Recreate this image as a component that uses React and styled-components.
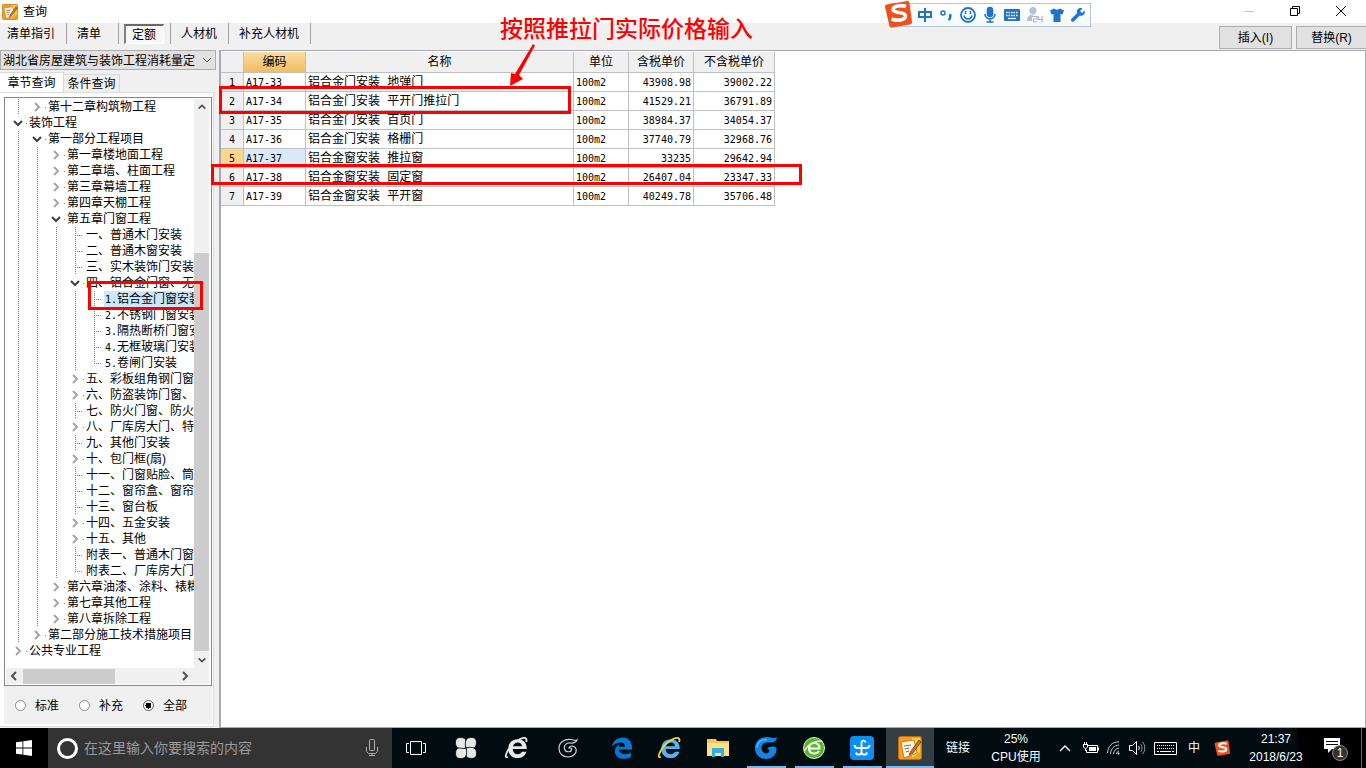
import React from "react";
import styled, { createGlobalStyle, css } from "styled-components";

const cjk = `"Liberation Sans", "Noto Sans CJK SC", sans-serif`;
const mono = `"Liberation Mono", "Noto Sans CJK SC", monospace`;
const digits = `"DejaVu Sans Mono", monospace`;

const Global = createGlobalStyle`
  *, *::before, *::after { box-sizing: border-box; }
  body { margin: 0; background: #f0f0f0; color: #000; font: 12px/16px ${cjk}; }
  button, input, select { font: inherit; color: inherit; margin: 0; padding: 0; border: 0; background: none; }
  svg { display: block; flex: none; }
`;

/* ---------- window frame ---------- */
const Page = styled.div`
  position: relative;
  display: flex;
  flex-direction: column;
  min-height: 100vh;
  overflow: hidden;
`;
const TitleBar = styled.header`
  display: flex;
  align-items: center;
  gap: 5px;
  height: 23px;
  padding-left: 2px;
  background: #fff;
`;
const Title = styled.h1`
  flex: 1;
  margin: 0;
  font-size: 12px;
  font-weight: 400;
`;
const WindowButton = styled.button`
  display: flex;
  align-items: center;
  justify-content: center;
  width: 46px;
  height: 22px;
  padding-bottom: 2px;
`;
const WindowButtons = styled.div`
  display: flex;
  margin-right: 2px;
`;
const Toolbar = styled.nav`
  display: flex;
  justify-content: space-between;
  height: 27px;
`;
const Modes = styled.div`
  display: flex;
  height: 21px;
`;
const Mode = styled.button`
  padding: 0 11px 0 10px;
  border-right: 1px solid #a0a0a0;
  white-space: nowrap;
  &:first-child { padding-left: 7px; }
  ${(p) => p.$wide && css`padding-right: 17px;`}
`;
const Pressed = styled.span`
  display: block;
  margin: 0 -5px;
  padding: 1px 7px 0 6px;
  border: 1px solid #fff;
  border-top: 2px solid #696969;
  border-left: 2px solid #808080;
  background: #f8f8f8;
`;
const Actions = styled.div`
  display: flex;
  gap: 4px;
  padding: 3px 0 1px;
`;
const Action = styled.button`
  width: 73px;
  border: 1px solid #adadad;
  background: #e1e1e1;
  &:last-child { width: 70px; border-right: 0; }
`;

/* ---------- left column ---------- */
const Body = styled.main`
  display: flex;
  flex: 1;
`;
const Side = styled.aside`
  display: flex;
  flex: none;
  flex-direction: column;
  width: 219px;
  padding-bottom: 1px;
`;
const Combo = styled.div`
  position: relative;
  width: 216px;
  height: 20px;
  svg { position: absolute; right: 4px; top: 7px; pointer-events: none; }
`;
const ComboSelect = styled.select`
  appearance: none;
  width: 100%;
  height: 20px;
  padding: 1px 18px 0 2px;
  border: 1px solid #adadad;
  background: #e1e1e1;
  overflow: hidden;
`;
const Tabs = styled.div`
  display: flex;
  align-items: flex-end;
  height: 22px;
  padding-top: 2px;
`;
const Tab = styled.button`
  width: 56px;
  height: 18px;
  padding-top: 1px;
  border: 1px solid #d9d9d9;
  border-width: 1px 1px 0 0;
  ${(p) => p.$active && css`
    width: 64px;
    height: 20px;
    padding-bottom: 1px;
    background: #fff;
  `}
`;
const TabPane = styled.section`
  display: flex;
  flex: 1;
  flex-direction: column;
  width: 214px;
  padding: 4px 1px 2px 4px;
  border: 1px solid #dcdcdc;
  border-left: 0;
  background: #fff;
`;
const TreeBox = styled.div`
  display: grid;
  flex: 1;
  grid-template: 1fr 16px / 188px 15px;
  width: 208px;
  padding: 1px;
  border: 1px solid #828790;
`;
const TreeList = styled.ul`
  margin: 0;
  padding: 0 0 0 3px;
  overflow: hidden;
  list-style: none;
`;
const TreeRow = styled.li`
  display: flex;
  height: 16px;
  white-space: nowrap;
`;
const dotsDown = "repeating-linear-gradient(to bottom, #808080 0 1px, transparent 1px 2px)";
const dotsAcross = "repeating-linear-gradient(to right, #808080 0 1px, transparent 1px 2px)";
const Guide = styled.span`
  flex: none;
  width: 19px;
  background: ${dotsDown} 9px 0 / 1px 16px no-repeat;
`;
const Leaf = styled.span`
  flex: none;
  width: 19px;
  background:
    ${dotsDown} 9px 0 / 1px ${(p) => (p.$last ? 8 : 16)}px no-repeat,
    ${dotsAcross} 9px 8px / 8px 1px no-repeat;
`;
const Toggle = styled.button`
  display: flex;
  flex: none;
  align-items: center;
  width: 19px;
  padding-left: 3px;
  background: ${dotsAcross} 17px 8px / 1px 1px no-repeat;
`;
const Label = styled.span`
  padding: 0 1px;
  background: ${(p) => (p.$selected ? "#cce8ff" : "none")};
`;
const Num = styled.span`
  font-family: ${digits};
  font-size: 10px;
`;
const ScrollY = styled.div`
  display: flex;
  flex-direction: column;
  align-items: center;
  justify-content: space-between;
  padding: 3px 0;
  background: #f0f0f0;
`;
const ThumbY = styled.div`
  width: 15px;
  flex: 1;
  margin: 141px 0 4px;
  background: #cdcdcd;
`;
const ScrollX = styled.div`
  display: flex;
  grid-column: 1 / 3;
  align-items: center;
  padding: 0 18px 0 2px;
  background: #f0f0f0;
`;
const ThumbX = styled.div`
  width: 92px;
  height: 15px;
  margin: 0 auto 0 3px;
  background: #cdcdcd;
`;
const Filters = styled.div`
  display: flex;
  gap: 20px;
  align-items: center;
  height: 38px;
  padding: 1px 0 0 11px;
  background: #f0f0f0;
`;
const Filter = styled.label`
  display: flex;
  align-items: center;
  gap: 9px;
`;
const Radio = styled.input`
  appearance: none;
  width: 11px;
  height: 11px;
  border: 1px solid #8a8a8a;
  border-radius: 50%;
  background: #fff;
  &:checked { background: radial-gradient(circle, #000 0 3px, #fff 3px); border-color: #555; }
`;

/* ---------- price table ---------- */
const Sheet = styled.section`
  flex: 1;
  border: 1px solid #a8a8b0;
  border-left-width: 2px;
  background: #fff;
  padding-top: 1px;
`;
const Table = styled.table`
  width: 554px;
  border-collapse: separate;
  border-spacing: 0;
  table-layout: fixed;
`;
const Th = styled.th`
  width: ${(p) => p.$w}px;
  height: 21px;
  padding: 0;
  border: solid #c0c0c0;
  border-width: 0 1px 1px 0;
  background: ${(p) => (p.$hot ? "linear-gradient(#fbdca4, #f3bd5e)" : "#f0f0f0")};
  font-weight: 400;
`;
const Td = styled.td`
  height: 19px;
  padding: 2px 2px 0;
  border: solid #c0c0c0;
  border-width: 0 1px 1px 0;
  background: ${(p) => (p.$hot ? "#d9eafa" : "#fff")};
  font: 12px/16px ${mono};
  text-align: ${(p) => p.$align || "left"};
  white-space: nowrap;
  ${(p) => p.$small && css`
    font-family: ${digits};
    font-size: 10px;
  `}
`;
const RowHead = styled(Td).attrs({ as: "th", scope: "row" })`
  background: ${(p) => (p.$hot ? "#ffd58a" : "#f0f0f0")};
  font-weight: 400;
  text-align: center;
`;

/* ---------- red markup laid over the window ---------- */
const MarkBox = styled.div`
  position: absolute;
  left: ${(p) => p.$x}px;
  top: ${(p) => p.$y}px;
  width: ${(p) => p.$w}px;
  height: ${(p) => p.$h}px;
  border: 3px solid #f00;
  pointer-events: none;
`;
const MarkNote = styled.p`
  position: absolute;
  left: 500px;
  top: 14px;
  margin: 0;
  color: #f00;
  font-size: 23px;
  font-weight: 500;
  line-height: 30px;
  white-space: nowrap;
`;
const MarkArrow = styled.svg`
  position: absolute;
  left: 506px;
  top: 42px;
`;

/* ---------- input method bar ---------- */
const ImeBar = styled.div`
  position: absolute;
  top: 3px;
  right: 275px;
  display: flex;
  align-items: center;
  gap: 5px;
  width: 201px;
  height: 24px;
  padding-left: 26px;
  border: 1px solid #b4c6da;
  background: linear-gradient(#fff, #f4f9fd);
`;
const ImeLogo = styled.span`
  position: absolute;
  left: -7px;
  top: -4px;
`;

/* ---------- taskbar ---------- */
const Taskbar = styled.footer`
  display: flex;
  height: 40px;
  background: #000c10;
  color: #fff;
`;
const Start = styled.button`
  display: flex;
  flex: none;
  align-items: center;
  justify-content: center;
  width: 48px;
  background: #000;
`;
const Search = styled.label`
  display: flex;
  flex: none;
  align-items: center;
  gap: 5px;
  width: 344px;
  padding: 0 14px 0 8px;
  background: #333;
`;
const SearchInput = styled.input`
  flex: 1;
  min-width: 0;
  font-size: 14px;
  &::placeholder { color: #9a9a9a; opacity: 1; }
`;
const Apps = styled.div`
  display: flex;
  flex: 1;
`;
const AppButton = styled.button`
  display: flex;
  flex: none;
  align-items: center;
  justify-content: center;
  width: ${(p) => p.$w || 48}px;
  background: ${(p) => (p.$active ? "#343e42" : "none")};
  ${(p) => p.$running && css`
    background-image: linear-gradient(#76b9ed, #76b9ed);
    background-size: ${p.$active ? "48px" : "39px"} 2px;
    background-position: center bottom;
    background-repeat: no-repeat;
  `}
`;
const PinGroup = styled.div`
  display: flex;
  margin-right: 5px;
`;
const Tray = styled.div`
  display: flex;
  flex: none;
  align-items: center;
  background: linear-gradient(#000, #000) right / 69px 40px no-repeat;
`;
const TrayItem = styled.button`
  display: flex;
  flex: none;
  align-items: center;
  justify-content: center;
  width: ${(p) => p.$w}px;
  height: 40px;
  font-size: 12px;
  line-height: 18px;
  white-space: nowrap;
`;
const Peek = styled.span`
  width: 5px;
  height: 40px;
  margin-left: 3px;
  border-left: 1px solid #666;
`;

/* ---------- drawings ---------- */
const Chevron = ({ dir, color = "#505050", size = 12, w = 2 }) => {
  const d = {
    down: "M2 4l4 4 4-4",
    up: "M2 8l4-4 4 4",
    right: "M4 2l4 4-4 4",
    left: "M8 2L4 6l4 4",
  }[dir];
  return (
    <svg width={size} height={size} viewBox="0 0 12 12" fill="none" stroke={color} strokeWidth={w}>
      <path d={d} />
    </svg>
  );
};
const BookIcon = ({ size }) => (
  <svg width={size} height={size} viewBox="0 0 24 24">
    <rect x=".5" y=".5" width="23" height="23" rx="2" fill="#f5a01a" stroke="#c66a08" />
    <path d="M14 2h8v14l-8 6z" fill="#ffd042" />
    <path d="M3 6l13-2 3 13-13 5z" fill="#fff8e4" stroke="#b56a1a" strokeWidth=".8" />
    <path d="M6 10l7-1M6.500 13l5-1M8 16l3-1" stroke="#8b6a48" strokeWidth="1.200" />
    <path d="M21 4l-8 11-2 4 4-2 8-11z" fill="#c9781a" stroke="#6b3c08" strokeWidth=".8" />
  </svg>
);
const SogouIcon = ({ size }) => (
  <svg width={size} height={size} viewBox="0 0 28 28">
    <path d="M3 4.500L23 1c1.500-.2 2.300.4 2.500 1.700L28 22c.2 1.400-.5 2.200-1.800 2.400L8 27.500c-1.400.2-2.300-.4-2.600-1.700L1 7c-.3-1.400.5-2.200 2-2.500z" fill="#f0501e" />
    <path d="M22 6.500c-5-1.800-13-.8-13 3 0 4.500 12.500 1.500 12.500 6.500 0 4.500-9 5-14 3" fill="none" stroke="#fff" strokeWidth="3.600" />
  </svg>
);
const blue = "#1f74c9";
const ImeIcons = () => (
  <>
    <svg width="16" height="16" viewBox="0 0 16 16" fill="none" stroke={blue} strokeWidth="2">
      <path d="M2 5h12v5H2zM8 1v14" />
    </svg>
    <svg width="16" height="16" viewBox="0 0 16 16" fill="none" stroke={blue} strokeWidth="1.500">
      <circle cx="5" cy="6" r="2" />
      <path d="M11 8.500h1.500c0 2 0 3-2 4.500" strokeWidth="2.400" />
    </svg>
    <svg width="18" height="18" viewBox="0 0 18 18" fill="none" stroke={blue} strokeWidth="1.800">
      <circle cx="9" cy="9" r="7" />
      <path d="M5 9.500c1 4.500 7 4.500 8 0M6.500 5v3M11.500 5v3" strokeWidth="1.500" />
    </svg>
    <svg width="16" height="18" viewBox="0 0 16 18" fill="none" stroke={blue} strokeWidth="1.600">
      <rect x="5.500" y="1.500" width="5" height="9" rx="2.500" fill={blue} />
      <path d="M3 8c0 6.500 10 6.500 10 0M8 13v3M4.500 16h7" />
    </svg>
    <svg width="18" height="16" viewBox="0 0 18 16">
      <rect x="1" y="2" width="16" height="12" rx="1" fill={blue} />
      <path d="M3 5.500h12M3 8.500h12" stroke="#fff" strokeWidth="1.500" strokeDasharray="1.500 1" />
      <path d="M5 11.500h8" stroke="#fff" strokeWidth="1.300" />
    </svg>
    <svg width="18" height="18" viewBox="0 0 18 18">
      <circle cx="7" cy="4.500" r="3.500" fill="#b4c0d4" />
      <path d="M1 15c0-4 2-6.500 6-6.500s5 1 6 3.500v3z" fill="#b4c0d4" />
      <path d="M7 10.500h4v2.500H7.500V16H11M12.500 10v3.500H17M16 10v6.500" fill="none" stroke="#fff" strokeWidth="3" />
      <path d="M7 10.500h4v2.500H7.500V16H11M12.500 10v3.500H17M16 10v6.500" fill="none" stroke="#aab6cc" strokeWidth="1.200" />
    </svg>
    <svg width="16" height="16" viewBox="0 0 16 16">
      <path d="M5 1.500c1.500 1.500 4.500 1.500 6 0l4 2-1.500 4-2-.5v8h-7V7l-2 .5L1 3.500z" fill={blue} />
    </svg>
    <svg width="16" height="16" viewBox="0 0 16 16">
      <path d="M14.500 3.500L12 6 10 4l2.500-2.500C9 0 6 3 7.300 6L1.500 11.800c-1.500 1.500.8 4 2.500 2.500L9.800 8.500c3.200 1.200 6-1.800 4.700-5z" fill={blue} />
    </svg>
  </>
);
const eRing = "M21 13H8c.3 3.300 2 4.800 4.700 4.800 1.900 0 3.100-.8 3.800-2.300h4.200c-1.200 3.900-4 5.800-8.100 5.800C7.400 21.300 4 18 4 12.700 4 7.500 7.600 4 12.600 4 18 4 21.200 7.600 21 13zM8.200 10.400h8.500c-.2-2.200-1.700-3.500-4.100-3.500-2.300 0-3.900 1.300-4.400 3.500z";
const Browser = ({ fill, ring }) => (
  <svg width="26" height="26" viewBox="0 0 24 24">
    <path d={eRing} fill={fill} />
    <path d="M3.500 20C-1.500 23 4 10 12 5.500c5-3.500 10-4.500 8.500 1" fill="none" stroke={ring} strokeWidth="1.700" />
  </svg>
);

/* ---------- data ---------- */
// [depth, kind, text]; kind: open, closed, leaf, last
const tree = [
  [1, "closed", "第十二章构筑物工程"],
  [0, "open", "装饰工程"],
  [1, "open", "第一部分工程项目"],
  [2, "closed", "第一章楼地面工程"],
  [2, "closed", "第二章墙、柱面工程"],
  [2, "closed", "第三章幕墙工程"],
  [2, "closed", "第四章天棚工程"],
  [2, "open", "第五章门窗工程"],
  [3, "leaf", "一、普通木门安装"],
  [3, "leaf", "二、普通木窗安装"],
  [3, "leaf", "三、实木装饰门安装"],
  [3, "open", "四、铝合金门窗、无"],
  [4, "leaf", "铝合金门窗安装", "1."],
  [4, "leaf", "不锈钢门窗安装", "2."],
  [4, "leaf", "隔热断桥门窗安装", "3."],
  [4, "leaf", "无框玻璃门安装", "4."],
  [4, "last", "卷闸门安装", "5."],
  [3, "closed", "五、彩板组角钢门窗"],
  [3, "closed", "六、防盗装饰门窗、"],
  [3, "leaf", "七、防火门窗、防火"],
  [3, "closed", "八、厂库房大门、特"],
  [3, "leaf", "九、其他门安装"],
  [3, "closed", "十、包门框(扇)"],
  [3, "leaf", "十一、门窗贴脸、筒"],
  [3, "leaf", "十二、窗帘盒、窗帘"],
  [3, "leaf", "十三、窗台板"],
  [3, "closed", "十四、五金安装"],
  [3, "closed", "十五、其他"],
  [3, "leaf", "附表一、普通木门窗"],
  [3, "last", "附表二、厂库房大门"],
  [2, "closed", "第六章油漆、涂料、裱糊"],
  [2, "closed", "第七章其他工程"],
  [2, "closed", "第八章拆除工程"],
  [1, "closed", "第二部分施工技术措施项目"],
  [0, "closed", "公共专业工程"],
];
const prices = [
  ["A17-33", "铝合金门安装 地弹门", "43908.98", "39002.22"],
  ["A17-34", "铝合金门安装 平开门推拉门", "41529.21", "36791.89"],
  ["A17-35", "铝合金门安装 百页门", "38984.37", "34054.37"],
  ["A17-36", "铝合金门安装 格栅门", "37740.79", "32968.76"],
  ["A17-37", "铝合金窗安装 推拉窗", "33235", "29642.94"],
  ["A17-38", "铝合金窗安装 固定窗", "26407.04", "23347.33"],
  ["A17-39", "铝合金窗安装 平开窗", "40249.78", "35706.48"],
];

const TreeNode = ({ node: [depth, kind, text, num] }) => (
  <TreeRow role="treeitem" aria-level={depth + 1} aria-selected={num === "1."}>
    {Array.from({ length: depth }, (_, i) => <Guide key={i} />)}
    {kind === "leaf" || kind === "last" ? (
      <Leaf $last={kind === "last"} />
    ) : (
      <Toggle aria-label={text}>
        <Chevron dir={kind === "open" ? "down" : "right"} color={kind === "open" ? "#404040" : "#a6a6a6"} />
      </Toggle>
    )}
    <Label $selected={num === "1."}>
      {num && <Num>{num}</Num>}
      {text}
    </Label>
  </TreeRow>
);

export default function App() {
  return (
    <>
      <Global />
      <Page>
        <TitleBar>
          <BookIcon size={16} />
          <Title>查询</Title>
          <WindowButtons>
            <WindowButton aria-label="最小化">
              <svg width="10" height="10"><path d="M0 5.500h10" stroke="#c8c8c8" /></svg>
            </WindowButton>
            <WindowButton aria-label="还原">
              <svg width="10" height="10" fill="none" stroke="#000"><path d="M.5 2.500h7v7h-7zM2.500 2.500v-2h7v7h-2" /></svg>
            </WindowButton>
            <WindowButton aria-label="关闭">
              <svg width="10" height="10" stroke="#000"><path d="M0 0l10 10M10 0L0 10" /></svg>
            </WindowButton>
          </WindowButtons>
        </TitleBar>

        <Toolbar>
          <Modes>
            <Mode>清单指引</Mode>
            <Mode $wide>清单</Mode>
            <Mode aria-pressed="true"><Pressed>定额</Pressed></Mode>
            <Mode>人材机</Mode>
            <Mode>补充人材机</Mode>
          </Modes>
          <Actions>
            <Action>插入(I)</Action>
            <Action>替换(R)</Action>
          </Actions>
        </Toolbar>

        <Body>
          <Side>
            <Combo>
              <ComboSelect aria-label="定额库">
                <option>湖北省房屋建筑与装饰工程消耗量定</option>
              </ComboSelect>
              <svg width="10" height="7" fill="none" stroke="#505050"><path d="M1 1l4 4 4-4" /></svg>
            </Combo>
            <Tabs role="tablist">
              <Tab role="tab" aria-selected="true" $active>章节查询</Tab>
              <Tab role="tab">条件查询</Tab>
            </Tabs>
            <TabPane>
              <TreeBox>
                <TreeList role="tree">
                  {tree.map((node) => <TreeNode key={node[2]} node={node} />)}
                </TreeList>
                <ScrollY>
                  <Chevron dir="up" size={10} />
                  <ThumbY />
                  <Chevron dir="down" size={10} />
                </ScrollY>
                <ScrollX>
                  <Chevron dir="left" />
                  <ThumbX />
                  <Chevron dir="right" />
                </ScrollX>
              </TreeBox>
              <Filters>
                <Filter><Radio type="radio" name="scope" />标准</Filter>
                <Filter><Radio type="radio" name="scope" />补充</Filter>
                <Filter><Radio type="radio" name="scope" defaultChecked />全部</Filter>
              </Filters>
            </TabPane>
          </Side>

          <Sheet>
            <Table>
              <thead>
                <tr>
                  <Th $w={23} />
                  <Th $w={62} $hot>编码</Th>
                  <Th $w={268}>名称</Th>
                  <Th $w={55}>单位</Th>
                  <Th $w={65}>含税单价</Th>
                  <Th $w={81}>不含税单价</Th>
                </tr>
              </thead>
              <tbody>
                {prices.map(([code, name, taxed, untaxed], i) => (
                  <tr key={code}>
                    <RowHead $small $hot={i === 4}>{i + 1}</RowHead>
                    <Td $small $hot={i === 4}>{code}</Td>
                    <Td>{name}</Td>
                    <Td $small>100m2</Td>
                    <Td $small $align="right">{taxed}</Td>
                    <Td $small $align="right">{untaxed}</Td>
                  </tr>
                ))}
              </tbody>
            </Table>
          </Sheet>
        </Body>

        <Taskbar>
          <Start aria-label="开始">
            <svg width="16" height="16" fill="#fff"><path d="M0 2.300l6.500-.9v6.200H0zM7.300 1.200L16 0v7.600H7.300zM0 8.400h6.500v6.200L0 13.700zM7.300 8.400H16V16l-8.700-1.200z" /></svg>
          </Start>
          <Search>
            <svg width="23" height="23" fill="none"><circle cx="11.500" cy="11.500" r="9" stroke="#fff" strokeWidth="3" /></svg>
            <SearchInput type="search" aria-label="搜索" placeholder="在这里输入你要搜索的内容" />
            <svg width="12" height="18" fill="none" stroke="#b0b0b0"><rect x="3.500" y=".5" width="5" height="11" rx="1" /><path d="M.5 8v4.500l2 2h7l2-2V8M6 14.500V17M3 16.500h6" /></svg>
          </Search>
          <Apps>
            <AppButton aria-label="任务视图">
              <svg width="20" height="14" fill="none" stroke="#fff"><path d="M4.500.5h11v13h-11zM3 2.500H.5v9H3M17 2.500h2.500v9H17" /></svg>
            </AppButton>
            <PinGroup>
              <AppButton $w={51} aria-label="四叶草">
                <svg width="22" height="22" viewBox="0 0 22 22" fill="#e8e8e8" stroke="#000c10" strokeWidth=".8">
                  {[0, 90, 180, 270].map((turn) => (
                    <path key={turn} transform={`rotate(${turn} 11 11)`} d="M11 11C8 12 4.500 12 2.500 10.500 0 9 0 3.500 1.500 2 3.500 0 8.500 0 10.500 2.500 12 5 9.500 8 11 11z" />
                  ))}
                </svg>
              </AppButton>
              <AppButton $w={51} aria-label="浏览器"><Browser fill="#e8e8e8" ring="#e8e8e8" /></AppButton>
              <AppButton $w={51} aria-label="漩涡">
                <svg width="20" height="20" viewBox="0 0 20 20" fill="none" stroke="#d0d0d0" strokeWidth="1.200">
                  <path d="M19 2c-2 1-3 0-6-.5C6 .5 1 5 1 10.500 1 16 5 19 10 19c5.500 0 9-4 8-8-1-3.500-6-4-7-1 2-.5 3 .5 2.500 2-.8 2.500-6 2.500-7-1C5.500 7 9 4.500 12 5c4 .5 6-.5 7-3z" />
                </svg>
              </AppButton>
            </PinGroup>
            <AppButton aria-label="Edge">
              <svg width="22" height="22" viewBox="0 0 22 22" fill="#0078d7">
                <path d="M1 9.500C2 4 6 .5 11.500.5 18 .5 21 5 21 10v2.500H8c.2 5 7 6 12 3v4.500c-3 1.500-6 2-8.500 1.800C5 21.500 2 15 5 10.500c1-1.500 2.500-2.700 4-3.400C8 8 7.800 9 7.700 9.800h6.500C14.500 4 6 4 1 9.500z" />
              </svg>
            </AppButton>
            <AppButton aria-label="Internet Explorer"><Browser fill="#52b5ef" ring="#f6cf35" /></AppButton>
            <AppButton aria-label="文件资源管理器">
              <svg width="22" height="20" viewBox="0 0 22 20">
                <path d="M0 1h9l1 2h12v15H0z" fill="#f5c84c" />
                <path d="M0 5h22v13H0z" fill="#ffe08a" />
                <path d="M5 10h12v9h-3v-4H8v4H5z" fill="#35aee2" />
              </svg>
            </AppButton>
            <AppButton $running aria-label="高速浏览器">
              <svg width="24" height="24" viewBox="0 0 24 24">
                <path d="M23 1c-3 2-5 .5-9 0C6 .5 1 5.500 1 12c0 6.500 4.500 11 11 11 7 0 11-5 10.500-11-3-2-7-2-9.500 1 2 0 3 1 2 3-2 3-7.500 1-7.500-4 0-4 3.500-6 7.500-5.500C20 7 22.500 5 23 1z" fill="#1583e6" />
                <path d="M3 12C3 6 8 3 13 4" fill="none" stroke="#49b6ff" strokeWidth="1.500" />
              </svg>
            </AppButton>
            <AppButton $running aria-label="安全浏览器">
              <svg width="24" height="24" viewBox="0 0 24 24">
                <circle cx="12" cy="12" r="10.500" fill="#58b52c" stroke="#d4f0c0" />
                <path d="M7 12.500h10.500C17.500 9 15.500 7 12.300 7 9 7 7 9.300 7 12.300c0 3.200 2 5.200 5.300 5.200 2.300 0 3.900-.9 4.800-2.500" fill="none" stroke="#fff" strokeWidth="2" />
                <path d="M2.500 15C5 9 13 4 20.500 5.500" fill="none" stroke="#fff" strokeWidth="1.200" />
              </svg>
            </AppButton>
            <AppButton $running aria-label="云助手">
              <svg width="24" height="24" viewBox="0 0 24 24" fill="none" stroke="#fff" strokeWidth="1.800">
                <rect width="24" height="24" rx="4" fill="#0b8ff5" stroke="none" />
                <path d="M15.500 6.500C15 4 11.500 4 11.500 7v9c0 3.500-5 3.500-5.500.5M4.500 9c0 2 1 3 3 3h9c2 0 3-1 3-3M11.500 16c0 3.500 5 3.500 5.500.5" />
              </svg>
            </AppButton>
            <AppButton $running $active aria-label="查询"><BookIcon size={24} /></AppButton>
          </Apps>
          <Tray>
            <TrayItem $w={48}>链接</TrayItem>
            <TrayItem $w={68}>25%<br />CPU使用</TrayItem>
            <TrayItem $w={30} aria-label="显示隐藏的图标">
              <svg width="12" height="8" fill="none" stroke="#fff" strokeWidth="1.400"><path d="M1 7l5-5 5 5" /></svg>
            </TrayItem>
            <TrayItem $w={22} aria-label="电池">
              <svg width="16" height="12" fill="none" stroke="#fff"><path d="M5 3.500h9.500v7h-11V8M15.500 5.500v3M0 2.500h5M1.500 0v2M3.500 0v2M.5 3v2l2 2 2-2V3M2.500 7v2" /><path d="M6 5h7v4H6z" fill="#fff" stroke="none" /></svg>
            </TrayItem>
            <TrayItem $w={24} aria-label="网络">
              <svg width="14" height="14" fill="none" stroke="#c8c8c8"><path d="M.5 12C1 5 5 1 12 .8M3.500 13C4 7.500 7 4.500 12 4M6.500 13c.5-3.500 2.500-5.500 5.500-6M9.500 13c.2-1.500 1-2.500 2.500-3" /><circle cx="11.500" cy="12.500" r="1" fill="#fff" stroke="none" /></svg>
            </TrayItem>
            <TrayItem $w={22} aria-label="音量">
              <svg width="17" height="14" fill="none" stroke="#fff"><path d="M.5 4.500h3l4-4v13l-4-4h-3zM9.500 5c1 1 1 3 0 4" /><path d="M11.500 3c2 2 2 6 0 8M13.500 1c3 3 3 9 0 12" stroke="#999" /></svg>
            </TrayItem>
            <TrayItem $w={34} aria-label="触摸键盘">
              <svg width="23" height="13" fill="none" stroke="#fff"><path d="M.5.5h22v12H.5z" /><path d="M3 3.500h17M3 6.500h17" strokeDasharray="1 1" /><path d="M3 9.500h2M6 9.500h11M18 9.500h2" /></svg>
            </TrayItem>
            <TrayItem $w={24}>中</TrayItem>
            <TrayItem $w={32} aria-label="搜狗输入法"><SogouIcon size={16} /></TrayItem>
            <TrayItem $w={76}>21:37<br />2018/6/23</TrayItem>
            <TrayItem $w={44} aria-label="通知">
              <svg width="26" height="26" viewBox="0 0 26 26">
                <path d="M1 3h16v11H9l-4 4v-4H1z" fill="#fff" />
                <path d="M3 6.500h12M3 9.500h12" stroke="#000" />
                <circle cx="17" cy="18" r="7.500" fill="#333" stroke="#888" />
                <text x="17" y="22" fill="#fff" fontSize="12" textAnchor="middle">1</text>
              </svg>
            </TrayItem>
            <Peek />
          </Tray>
        </Taskbar>

        <ImeBar>
          <ImeLogo><SogouIcon size={28} /></ImeLogo>
          <ImeIcons />
        </ImeBar>
        <MarkNote>按照推拉门实际价格输入</MarkNote>
        <MarkArrow width="32" height="46" fill="#f00">
          <path d="M27 2l2 1.500L13 33l4 4L4 44l1-13 4 1z" />
        </MarkArrow>
        <MarkBox $x={219} $y={86} $w={352} $h={28} />
        <MarkBox $x={211} $y={164} $w={591} $h={21} />
        <MarkBox $x={88} $y={281} $w={115} $h={29} />
      </Page>
    </>
  );
}
